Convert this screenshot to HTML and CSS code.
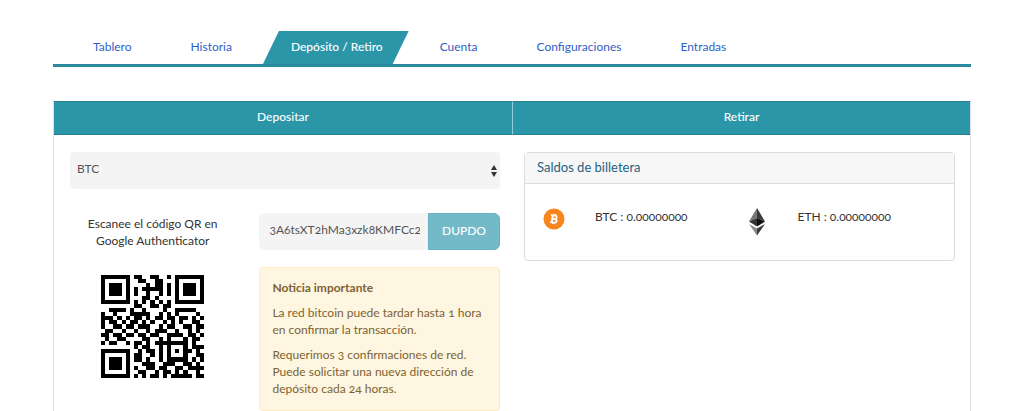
FILE: index.html
```html
<!DOCTYPE html>
<html lang="es">
<head>
    <meta charset="UTF-8">
    <meta name="viewport" content="width=device-width, initial-scale=1.0">
    <title>Depósito / Retiro</title>
    <link rel="stylesheet" href="styles.css">
</head>
<body>
    <div class="container">
        <nav class="main-nav">
            <a href="#">Tablero</a>
            <a href="#">Historia</a>
            <a href="#" class="active">Depósito / Retiro</a>
            <a href="#">Cuenta</a>
            <a href="#">Configuraciones</a>
            <a href="#">Entradas</a>
        </nav>

        <main class="panels">
            <section class="panel deposit">
                <h2 class="panel-title">Depositar</h2>
                <div class="panel-body">
                    <div class="select-wrap">
                        <select class="currency" aria-label="Moneda">
                            <option>BTC</option>
                            <option>ETH</option>
                        </select>
                        <svg class="select-arrow" width="6" height="12" viewBox="0 0 6 12">
                            <path d="M3 0L6 5H0zM3 12L0 7H6z" fill="#333"/>
                        </svg>
                    </div>
                    <div class="deposit-grid">
                        <div class="qr-box">
                            <label for="address">Escanee el código QR en Google Authenticator</label>
                            <svg class="qr" id="qr" viewBox="0 0 25 25"></svg>
                        </div>
                        <div class="address-box">
                            <div class="input-group">
                                <input type="text" id="address" class="address" value="3A6tsXT2hMa3xzk8KMFCc2bDSZ5tfDE9KF" readonly>
                                <button type="button" class="copy-btn">DUPDO</button>
                            </div>
                            <div class="notice">
                                <p><strong>Noticia importante</strong></p>
                                <p>La red bitcoin puede tardar hasta 1 hora en confirmar la transacción.</p>
                                <p>Requerimos 3 confirmaciones de red. Puede solicitar una nueva dirección de depósito cada 24 horas.</p>
                            </div>
                        </div>
                    </div>
                </div>
            </section>

            <section class="panel withdraw">
                <h2 class="panel-title">Retirar</h2>
                <div class="panel-body">
                    <div class="card">
                        <h3 class="card-header">Saldos de billetera</h3>
                        <div class="card-body">
                            <div class="balance">
                                <svg class="coin" width="22" height="22" viewBox="0 0 22 22">
                                    <circle cx="11" cy="11" r="10.5" fill="#f7861c"/>
                                    <g transform="rotate(8 11 11)" fill="none" stroke="#fff" stroke-width="1.8">
                                        <path d="M7.5 7.5H11.5C14 7.5 14 11 11.5 11H9.2M11.5 11C14.8 11 14.8 14.5 11.5 14.5H7.5M9.2 7.5V14.5"/>
                                        <path d="M10 5.8V7.5M12 5.8V7.5M10 14.5V16.2M12 14.5V16.2" stroke-width="1.2"/>
                                    </g>
                                </svg>
                                <span>BTC : 0.00000000</span>
                            </div>
                            <div class="balance">
                                <svg class="coin" width="18" height="28" viewBox="0 0 18 28">
                                    <path d="M9 0L1 13.5L9 10z" fill="#777"/>
                                    <path d="M9 0L17 13.5L9 10z" fill="#3c3c3b"/>
                                    <path d="M1 13.5L9 10V18.5z" fill="#343434"/>
                                    <path d="M17 13.5L9 10V18.5z" fill="#111"/>
                                    <path d="M1 16L9 20.5V27.5z" fill="#8c8c8c"/>
                                    <path d="M17 16L9 20.5V27.5z" fill="#3c3c3b"/>
                                </svg>
                                <span>ETH : 0.00000000</span>
                            </div>
                        </div>
                    </div>
                </div>
            </section>
        </main>
    </div>

    <script>
        // one string per row, # is a dark module
        const rows = [
            '#######.##..##..#.#######',
            '#.....#..##..##...#.....#',
            '#.###.#....#.##.#.#.###.#',
            '#.###.#.#.#####.#.#.###.#',
            '#.###.#.#..#..#.#.#.###.#',
            '#.....#...##.#....#.....#',
            '#######.#.#.#.#.#.#######',
            '........##..##.##........',
            '..####.#..#....#..#####..',
            '#..#...#####..#.#.#....#.',
            '###.#.#.##.#.##.##.##.#.#',
            '#.##.#.##.#.#..#.#.#..##.',
            '#..##.##.###..#.##..##.##',
            '.##..#..#..#.###..#..#.#.',
            '##.##.##.##.##..####.##.#',
            '.#..##....##..#.#...#.##.',
            '#.##..#.##.#.########.#..',
            '........#.##..#.#...#.###',
            '#######..#.##.#.#.#.##.#.',
            '#.....#.##..#.#.#...#..##',
            '#.###.#.##.#..#.#####.#.#',
            '#.###.#...###..###..##.#.',
            '#.###.#.#..##.##..##.####',
            '#.....#..##..#.##.#.#..#.',
            '#######.#.#.##.#.#####.##'
        ];
        const qr = document.getElementById('qr');
        let d = '';
        rows.forEach((row, y) => {
            [...row].forEach((cell, x) => {
                if (cell === '#') d += `M${x} ${y}h1v1h-1z`;
            });
        });
        const path = document.createElementNS('http://www.w3.org/2000/svg', 'path');
        path.setAttribute('d', d);
        path.setAttribute('shape-rendering', 'crispEdges');
        qr.appendChild(path);
    </script>
</body>
</html>
```
FILE: styles.css
```css
* {
    box-sizing: border-box;
}
body {
    margin: 0;
    background-color: #fff;
    color: #333;
    font-family: Lato, "Open Sans", sans-serif;
    font-size: 12px;
    line-height: 17px;
    font-variant-numeric: oldstyle-nums;
}
.container {
    padding: 31px 53px 0;
}
.main-nav {
    display: flex;
    padding-left: 12px;
    border-bottom: 3px solid #2a8c9e;
}
.main-nav a {
    padding: 7px 28px 9px;
    color: #2f5fc4;
    text-decoration: none;
}
.main-nav a + a {
    margin-left: 3px;
}
.main-nav .active {
    padding: 7px 26px 9px 28px;
    background-color: #2c96a9;
    color: #fff;
    font-weight: 500;
    clip-path: polygon(16px 0, 100% 0, calc(100% - 16px) 100%, 0 100%);
}
.panels {
    display: grid;
    grid-template-columns: 1fr 1fr;
    margin-top: 34px;
    border: 1px solid #dcdfe3;
    border-top: 0;
}
.panel {
    min-width: 0;
}
.panel-title {
    margin: 0;
    padding: 7px 8px 9px;
    background-color: #2c96a9;
    border-top: 1px solid #23808f;
    border-bottom: 1px solid #23808f;
    color: #fff;
    font-size: 12px;
    font-weight: 500;
    line-height: 16px;
    text-align: center;
}
.withdraw .panel-title {
    border-left: 1px solid #8fd0dc;
}
.deposit .panel-body {
    padding: 17px 12px 16px 16px;
}
.withdraw .panel-body {
    padding: 17px 15px 16px 12px;
}
.select-wrap {
    position: relative;
}
.currency {
    display: block;
    width: 100%;
    height: 37px;
    padding: 0 7px 4px;
    border: 0;
    border-radius: 4px;
    background-color: #f4f4f4;
    color: #555;
    font: inherit;
    appearance: none;
}
.select-arrow {
    position: absolute;
    top: 13px;
    right: 3px;
    pointer-events: none;
}
.deposit-grid {
    display: grid;
    grid-template-columns: minmax(0, 11fr) minmax(0, 16fr);
    gap: 24px;
    margin-top: 24px;
}
.qr-box {
    display: flex;
    flex-direction: column;
    align-items: center;
    padding: 2px 12px;
    text-align: center;
}
.qr {
    width: 103px;
    height: 103px;
    margin-top: 26px;
}
.input-group {
    display: flex;
}
.address {
    flex: 1;
    min-width: 0;
    height: 37px;
    padding: 0 8px 4px 10px;
    border: 0;
    border-radius: 6px 0 0 6px;
    background-color: #f4f4f4;
    color: #555;
    font: inherit;
    font-variant-numeric: inherit;
}
.copy-btn {
    padding: 0 13px 2px;
    border: 1px solid #68b0bf;
    border-radius: 0 6px 6px 0;
    background-color: #74b9c8;
    color: #fff;
    font: inherit;
    font-weight: 500;
}
.notice {
    margin-top: 17px;
    padding: 11px 12px 5px;
    border: 1px solid #faebc0;
    border-radius: 4px;
    background-color: #fef6e0;
    color: #7d6232;
}
.notice p {
    margin: 0 0 8px;
}
.card {
    border: 1px solid #dcdcdc;
    border-radius: 4px;
}
.card-header {
    margin: 0;
    padding: 6px 12px 7px;
    border-bottom: 1px solid #dcdcdc;
    background-color: #f7f7f7;
    color: #26617f;
    font-size: 13px;
    font-weight: normal;
    line-height: 17px;
}
.card-body {
    display: grid;
    grid-template-columns: 1fr 1fr;
    padding: 24px 12px;
}
.balance {
    display: grid;
    grid-template-columns: 34px 1fr;
    column-gap: 24px;
    height: 28px;
}
.coin {
    justify-self: center;
}
```
